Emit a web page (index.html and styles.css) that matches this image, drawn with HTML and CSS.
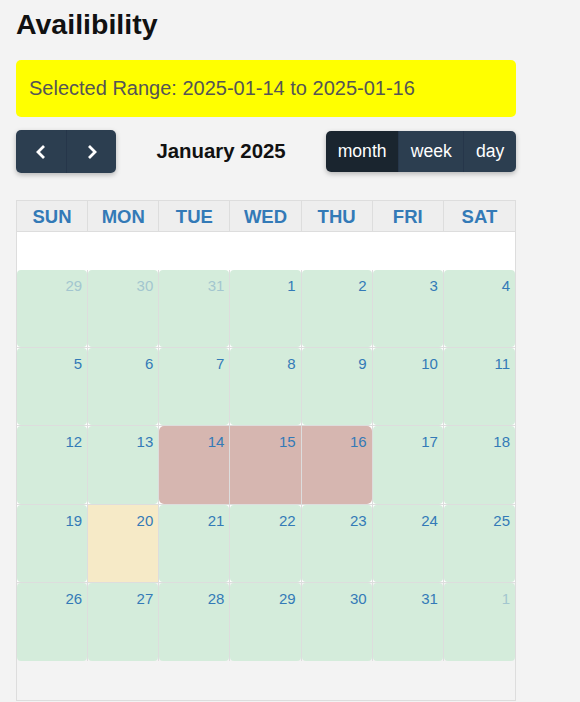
FILE: index.html
```html
<!DOCTYPE html>
<html lang="en">
<head>
    <meta charset="UTF-8">
    <meta name="viewport" content="width=device-width, initial-scale=1.0">
    <title>Availibility</title>
    <link rel="stylesheet" href="styles.css">
</head>
<body>
    <h1>Availibility</h1>

    <div class="range-box">Selected Range: 2025-01-14 to 2025-01-16</div>

    <div class="toolbar">
        <div class="btn-group">
            <button class="nav-btn" aria-label="prev">
                <svg width="12" height="16" viewBox="0 0 12 16"><path d="M9 2 L3 8 L9 14" fill="none" stroke="#fff" stroke-width="2.8"/></svg>
            </button>
            <button class="nav-btn" aria-label="next">
                <svg width="12" height="16" viewBox="0 0 12 16"><path d="M3 2 L9 8 L3 14" fill="none" stroke="#fff" stroke-width="2.8"/></svg>
            </button>
        </div>
        <h2 class="cal-title">January 2025</h2>
        <div class="btn-group views">
            <button class="view-btn active">month</button>
            <button class="view-btn">week</button>
            <button class="view-btn">day</button>
        </div>
    </div>

    <div class="calendar">
        <div class="cal-grid" id="grid">
            <div class="head">Sun</div>
            <div class="head">Mon</div>
            <div class="head">Tue</div>
            <div class="head">Wed</div>
            <div class="head">Thu</div>
            <div class="head">Fri</div>
            <div class="head">Sat</div>
            <div class="spacer"></div>
        </div>
    </div>

    <script>
        const grid = document.getElementById("grid");
        const days = [29, 30, 31];
        for (let d = 1; d <= 31; d++) days.push(d);
        days.push(1);

        days.forEach((day, i) => {
            const other = (i < 3) || (i === days.length - 1);
            const cell = document.createElement("div");
            cell.className = "day";
            if (i >= 28) cell.classList.add("last-row");

            const inner = document.createElement("div");
            inner.className = "day-inner";
            if (other) inner.classList.add("other");
            if (!other && day === 20) inner.classList.add("today");
            if (!other && day >= 14 && day <= 16) {
                inner.classList.add("booked");
                if (day === 14) inner.classList.add("start");
                if (day === 16) inner.classList.add("end");
            }
            inner.textContent = day;
            cell.appendChild(inner);
            grid.appendChild(cell);
        });
    </script>
</body>
</html>
```

FILE: styles.css
```css
body {
    margin: 0;
    padding: 8px 16px;
    background-color: #f3f3f3;
    font-family: "Liberation Sans", Arial, sans-serif;
    color: #111;
}
h1 {
    margin: 0;
    font-size: 28.5px;
    line-height: 32px;
    font-weight: bold;
}
.range-box {
    width: 500px;
    box-sizing: border-box;
    margin-top: 20px;
    padding: 17px 13px;
    font-size: 20px;
    line-height: 23px;
    color: #555;
    background-color: #ffff00;
    border-radius: 5px;
}
.toolbar {
    width: 500px;
    margin-top: 13px;
    height: 43px;
    display: flex;
    align-items: center;
    justify-content: space-between;
}
.btn-group {
    display: flex;
    border-radius: 5px;
    overflow: hidden;
    box-shadow: 0 2px 5px rgba(0, 0, 0, 0.25);
}
button {
    margin: 0;
    border: none;
    cursor: pointer;
    background-color: #2c3e50;
    color: #fff;
    font-family: "Liberation Sans", Arial, sans-serif;
}
.nav-btn {
    width: 50px;
    height: 43px;
    display: flex;
    align-items: center;
    justify-content: center;
}
.nav-btn + .nav-btn {
    border-left: 1px solid #26364a;
}
.views {
    height: 41px;
}
.view-btn {
    padding: 0 11.6px;
    font-size: 17.6px;
    height: 41px;
}
.view-btn + .view-btn {
    border-left: 1px solid #26364a;
}
.view-btn.active {
    background-color: #1a252f;
}
.cal-title {
    margin: 0;
    font-size: 20.4px;
    font-weight: bold;
}
.calendar {
    width: 500px;
    height: 501px;
    box-sizing: border-box;
    margin-top: 27px;
    border: 1px solid #ddd;
}
.cal-grid {
    display: grid;
    grid-template-columns: repeat(7, 1fr);
}
.head {
    height: 31px;
    box-sizing: border-box;
    border-right: 1px solid #ddd;
    border-bottom: 1px solid #ddd;
    background-color: #eee;
    color: #337ab7;
    font-size: 18.5px;
    font-weight: bold;
    text-transform: uppercase;
    text-align: center;
    line-height: 31px;
}
.head:nth-child(7) {
    border-right: none;
}
.spacer {
    grid-column: 1 / -1;
    height: 38px;
    background-color: #fff;
}
.day {
    height: 78.2px;
    box-sizing: border-box;
    border-right: 1px solid #ddd;
    border-bottom: 1px solid #ddd;
    background-color: #fff;
}
.day:nth-child(7n+1) {
    border-right: none;
}
.day.last-row {
    border-bottom: none;
    background-color: transparent;
}
.day-inner {
    height: 100%;
    box-sizing: border-box;
    padding: 7px 5px 0 0;
    text-align: right;
    font-size: 15px;
    line-height: 18px;
    color: #337ab7;
    background-color: #d4ecdb;
    border-radius: 4px;
}
.day-inner.other {
    color: #a3c6cf;
}
.day-inner.today {
    background-color: #f6eac7;
    border-radius: 0;
}
.day-inner.booked {
    background-color: #d6b6b0;
    border-radius: 0;
}
.day-inner.start {
    border-radius: 5px 0 0 5px;
}
.day-inner.end {
    border-radius: 0 5px 5px 0;
}
```
